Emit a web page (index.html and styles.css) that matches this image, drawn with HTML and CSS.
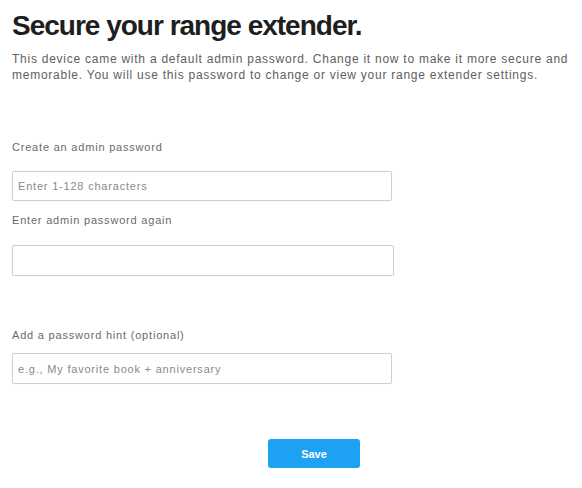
FILE: index.html
```html
<!DOCTYPE html>
<html>
<head>
<meta charset="utf-8">
<link rel="stylesheet" href="styles.css">
</head>
<body>
<main class="page">
  <h1 class="title">Secure your range extender.</h1>
  <p class="intro">This device came with a default admin password. Change it now to make it more secure and memorable. You will use this password to change or view your range extender settings.</p>
  <form class="form">
    <label class="label label-first">Create an admin password</label>
    <input class="field field-first" type="password" placeholder="Enter 1-128 characters">
    <label class="label label-second">Enter admin password again</label>
    <input class="field field-second" type="password">
    <label class="label label-hint">Add a password hint (optional)</label>
    <input class="field field-hint" type="text" placeholder="e.g., My favorite book + anniversary">
    <div class="actions">
      <button class="save" type="button">Save</button>
    </div>
  </form>
</main>
</body>
</html>
```
FILE: styles.css
```css
* { box-sizing: border-box; }
html, body { margin: 0; background: #fff; }
body { font-family: "Liberation Sans", Arial, sans-serif; }
.page { padding: 10px 12px 0 12px; width: 582px; }
.title {
  margin: 0;
  font-size: 28px;
  font-weight: bold;
  color: #1e1e1e;
  line-height: 32px;
  letter-spacing: -1px;
}
.intro {
  margin: 9px 0 0 0;
  font-size: 12px;
  line-height: 16px;
  color: #5e5e5e;
  letter-spacing: 0.75px;
  width: 570px;
}
.form { display: flex; flex-direction: column; align-items: flex-start; }
.label {
  font-size: 11px;
  color: #6a6a6a;
  line-height: 14px;
  letter-spacing: 0.8px;
}
.label-first { margin-top: 57px; }
.label-second { margin-top: 12px; }
.label-hint { margin-top: 52px; }
.field {
  width: 380px;
  height: 31px;
  border: 1px solid #cfcfcf;
  border-radius: 2px;
  padding: 0 5px;
  font-family: "Liberation Sans", Arial, sans-serif;
  font-size: 11px;
  letter-spacing: 0.8px;
  color: #333;
  background: #fff;
  box-shadow: 0 0 1px rgba(0,0,0,0.08);
}
.field::placeholder { color: #8a8a8a; }
.field-first { margin-top: 17px; height: 30px; }
.field-second { margin-top: 18px; width: 382px; }
.field-hint { margin-top: 11px; }
.actions { margin-top: 55px; padding-left: 256px; }
.save {
  width: 92px;
  height: 29px;
  border: none;
  border-radius: 3px;
  background: #1da1f2;
  color: #fff;
  font-family: "Liberation Sans", Arial, sans-serif;
  font-weight: bold;
  font-size: 11px;
}
```
